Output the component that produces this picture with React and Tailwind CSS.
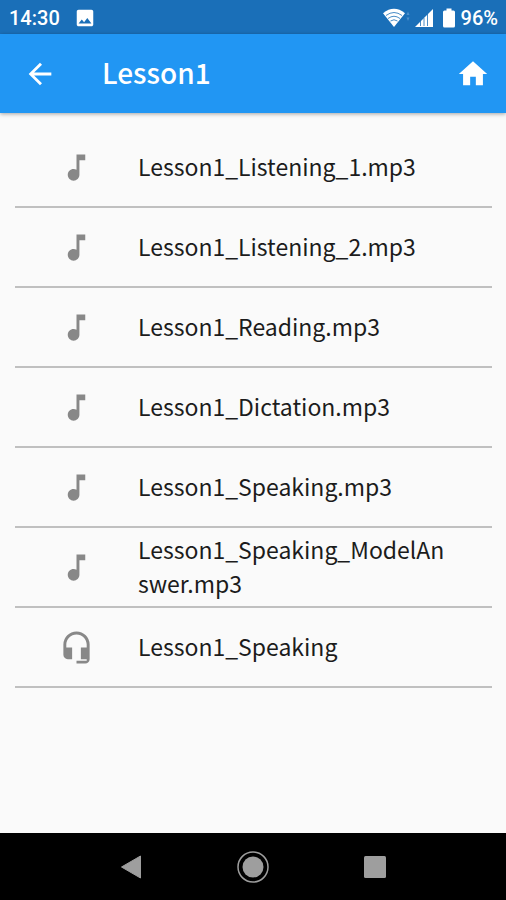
import { MdArrowBack, MdHome, MdMusicNote, MdHeadsetMic, MdImage } from 'react-icons/md';

const items = [
  { name: 'Lesson1_Listening_1.mp3', icon: MdMusicNote },
  { name: 'Lesson1_Listening_2.mp3', icon: MdMusicNote },
  { name: 'Lesson1_Reading.mp3', icon: MdMusicNote },
  { name: 'Lesson1_Dictation.mp3', icon: MdMusicNote },
  { name: 'Lesson1_Speaking.mp3', icon: MdMusicNote },
  { name: 'Lesson1_Speaking_ModelAnswer.mp3', icon: MdMusicNote },
  { name: 'Lesson1_Speaking', icon: MdHeadsetMic },
];

function WifiIcon() {
  return (
    <svg width="28" height="20" viewBox="0 0 28 20" aria-hidden="true">
      <path d="M0 5.2Q11 -3.6 22 5.2L11 19Z" fill="#fff" />
      <g fill="none" stroke="#1a6fb8" strokeWidth="0.8">
        <path d="M3 7.5Q11 1.5 19 7.5" />
        <path d="M5 10.5Q11 6 17 10.5" />
        <path d="M7.5 13Q11 10.500 14.500 13" />
      </g>
      <path d="M23.5 7L25 3.5L26.5 7ZM23.5 9.5L25 13L26.5 9.5Z" fill="#4d8fca" />
    </svg>
  );
}

function SignalIcon() {
  return (
    <svg width="18" height="18" viewBox="0 0 18 18" aria-hidden="true">
      <path d="M0 18L18 0V18Z" fill="#fff" />
      <path d="M5.5 12V17M9 9V17M12.5 5V17" stroke="#1a6fb8" strokeWidth="0.8" />
    </svg>
  );
}

function BatteryIcon() {
  return (
    <svg width="12" height="20" viewBox="0 0 12 20" aria-hidden="true">
      <path d="M3.5 0.5h5v2h2q1.5 0 1.5 1.5v14q0 1.5-1.5 1.5h-9q-1.5 0-1.5-1.5v-14q0-1.5 1.5-1.5h2z" fill="#fff" />
    </svg>
  );
}

function StatusBar() {
  return (
    <div className="flex h-[34px] items-center justify-between bg-[#1a6fb8] pt-px pr-2 pl-[9px] font-[Roboto,sans-serif] text-xl font-medium text-white">
      <div className="flex items-center gap-3.5">
        <span>14:30</span>
        <MdImage className="size-[22px]" />
      </div>
      <div className="flex items-center">
        <WifiIcon />
        <span className="ml-1 flex"><SignalIcon /></span>
        <span className="mr-1.5 ml-2.5 flex"><BatteryIcon /></span>
        <span>96%</span>
      </div>
    </div>
  );
}

export default function App() {
  return (
    <div className="flex min-h-screen flex-col bg-[#fafafa] font-['Noto_Sans_CJK_JP',sans-serif]">
      <StatusBar />
      <header className="flex h-[79px] items-center bg-[#2196f3] pr-4 pl-[23px] text-white shadow-[0_1px_4px_rgba(0,0,0,0.35)]">
        <button type="button" aria-label="Back">
          <MdArrowBack className="size-[34px]" />
        </button>
        <h1 className="ml-[45px] flex-1 pb-[3px] text-[28px] leading-10 font-medium">Lesson1</h1>
        <button type="button" aria-label="Home">
          <MdHome className="size-[34px]" />
        </button>
      </header>
      <main className="flex-1 pt-[15px] pr-[14px] pl-[15px]">
        <ul>
          {items.map(({ name, icon: Icon }) => (
            <li key={name} className="border-b-2 border-[#c0c0c0]">
              <button type="button" className="flex h-[78px] w-full items-center pr-10 pl-11 text-left">
                <Icon className="size-[35px] shrink-0 text-[#888888]" />
                <span className="ml-11 flex-1 pb-0.5 text-[23px] leading-[34px] break-all text-[#1c1c1c]">{name}</span>
              </button>
            </li>
          ))}
        </ul>
      </main>
      <nav className="flex h-[67px] items-center justify-center gap-[90px] bg-black text-[#9e9e9e]">
        <button type="button" aria-label="Back">
          <svg width="32" height="32" viewBox="0 0 32 32" aria-hidden="true">
            <path d="M6.5 16L25.5 5V27Z" fill="currentColor" stroke="currentColor" strokeLinejoin="round" />
          </svg>
        </button>
        <button type="button" aria-label="Home">
          <svg width="32" height="32" viewBox="0 0 32 32" aria-hidden="true">
            <circle cx="16" cy="16" r="15" fill="none" stroke="currentColor" strokeWidth="1.5" />
            <circle cx="16" cy="16" r="10.5" fill="currentColor" />
          </svg>
        </button>
        <button type="button" aria-label="Recent apps">
          <svg width="32" height="32" viewBox="0 0 32 32" aria-hidden="true">
            <rect x="5" y="5" width="22" height="22" rx="1.5" fill="currentColor" />
          </svg>
        </button>
      </nav>
    </div>
  );
}
